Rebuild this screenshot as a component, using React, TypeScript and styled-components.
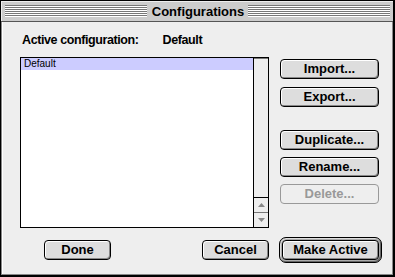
import React from 'react';
import styled, { createGlobalStyle } from 'styled-components';

const GlobalStyle = createGlobalStyle`
  html, body {
    margin: 0;
    padding: 0;
    background: #ffffff;
  }
  body {
    font-family: "Liberation Sans", Arial, sans-serif;
  }
`;

const Window = styled.div`
  width: 395px;
  height: 277px;
  box-sizing: border-box;
  display: flex;
  flex-direction: column;
  background: #cccccc;
  border-style: solid;
  border-color: #000;
  border-width: 1px 2px 2px 1px;
`;

const TitleBar = styled.div`
  height: 20px;
  flex: none;
  display: flex;
  align-items: center;
  padding: 0 3px 0 4px;
  background: #cccccc;
  border-bottom: 1px solid #555;
  box-shadow: inset 1px 1px 0 #eeeeee;
`;

const Stripes = styled.div`
  flex: 1;
  height: 12px;
  margin-top: -1px;
  background: repeating-linear-gradient(
    to bottom,
    #777777 0,
    #777777 1px,
    #ffffff 1px,
    #ffffff 2px
  );
`;

const Title = styled.div`
  padding: 0 4px 0 5px;
  font-size: 13px;
  font-weight: bold;
  line-height: 15px;
  color: #000;
`;

const Content = styled.div`
  flex: 1;
  display: flex;
  flex-direction: column;
  background: #eeeeee;
  border-style: solid;
  border-color: #888;
  border-width: 0 1px 1px 1px;
  box-shadow: inset 1px 0 0 #ffffff;
`;

const ActiveLine = styled.div`
  margin: 11px 0 0 20px;
  display: flex;
  gap: 24px;
  font-size: 12.5px;
  font-weight: bold;
  letter-spacing: -0.4px;
  line-height: 14px;
  color: #000;
`;

const MainRow = styled.div`
  margin: 10px 13px 0 18px;
  display: flex;
  gap: 11px;
`;

const ListBox = styled.div`
  width: 249px;
  height: 171px;
  box-sizing: border-box;
  border: 1px solid #000;
  display: flex;
  background: #fff;
`;

const Items = styled.div`
  flex: 1;
  display: flex;
  flex-direction: column;
`;

const Item = styled.div<{ $selected?: boolean }>`
  height: 12px;
  padding-left: 3px;
  font-size: 10px;
  line-height: 12px;
  color: #000;
  background: ${(p) => (p.$selected ? '#ccccff' : 'transparent')};
`;

const Scrollbar = styled.div`
  width: 14px;
  flex: none;
  border-left: 1px solid #000;
  display: flex;
  flex-direction: column;
  background: #eeeeee;
  box-shadow: inset 0 1px 0 #777;
`;

const Track = styled.div`
  flex: 1;
`;

const ArrowBox = styled.div<{ $first?: boolean }>`
  height: 14px;
  display: flex;
  align-items: center;
  justify-content: center;
  border-top: 1px solid ${(p) => (p.$first ? '#000' : '#777')};
  background: #eeeeee;
`;

const ButtonColumn = styled.div`
  width: 99px;
  display: flex;
  flex-direction: column;
  padding-top: 2px;
`;

const Button = styled.button<{ $gap?: number; $width?: number }>`
  box-sizing: border-box;
  width: ${(p) => (p.$width ? `${p.$width}px` : '100%')};
  height: 20px;
  margin-top: ${(p) => p.$gap ?? 0}px;
  padding: 0;
  border: 1px solid #000;
  border-radius: 4px;
  background: #dddddd;
  box-shadow: inset 1px 1px 0 #ffffff, inset -1px -1px 0 #888888;
  font-family: "Liberation Sans", Arial, sans-serif;
  font-size: 13px;
  font-weight: bold;
  line-height: 16px;
  color: #000;
  cursor: default;

  &:disabled {
    border-color: #999;
    background: #eeeeee;
    box-shadow: none;
    color: #999;
  }
`;

const BottomRow = styled.div`
  margin: 12px 14px 0 42px;
  display: flex;
  align-items: center;
`;

const Spacer = styled.div`
  flex: 1;
`;

const DefaultRing = styled.div`
  margin: -4px -4px -4px 10px;
  padding: 2px;
  border: 1px solid #000;
  border-radius: 7px;
  background: #aaaaaa;
  box-shadow: inset 1px 1px 0 #dddddd, inset -1px -1px 0 #666;
  display: flex;
`;

const Arrow = ({ up }: { up?: boolean }) => (
  <svg width="7" height="4" viewBox="0 0 7 4">
    <path d={up ? 'M3.5 0 L7 4 L0 4 Z' : 'M0 0 L7 0 L3.5 4 Z'} fill="#888" />
  </svg>
);

export default function App() {
  return (
    <>
      <GlobalStyle />
      <Window>
        <TitleBar>
          <Stripes />
          <Title>Configurations</Title>
          <Stripes />
        </TitleBar>
        <Content>
          <ActiveLine>
            <span>Active configuration:</span>
            <span>Default</span>
          </ActiveLine>
          <MainRow>
            <ListBox>
              <Items>
                <Item $selected>Default</Item>
              </Items>
              <Scrollbar>
                <Track />
                <ArrowBox $first>
                  <Arrow up />
                </ArrowBox>
                <ArrowBox>
                  <Arrow />
                </ArrowBox>
              </Scrollbar>
            </ListBox>
            <ButtonColumn>
              <Button>Import...</Button>
              <Button $gap={8}>Export...</Button>
              <Button $gap={23}>Duplicate...</Button>
              <Button $gap={7}>Rename...</Button>
              <Button $gap={7} disabled>
                Delete...
              </Button>
            </ButtonColumn>
          </MainRow>
          <BottomRow>
            <Button $width={67}>Done</Button>
            <Spacer />
            <Button $width={67}>Cancel</Button>
            <DefaultRing>
              <Button $width={97}>Make Active</Button>
            </DefaultRing>
          </BottomRow>
        </Content>
      </Window>
    </>
  );
}
